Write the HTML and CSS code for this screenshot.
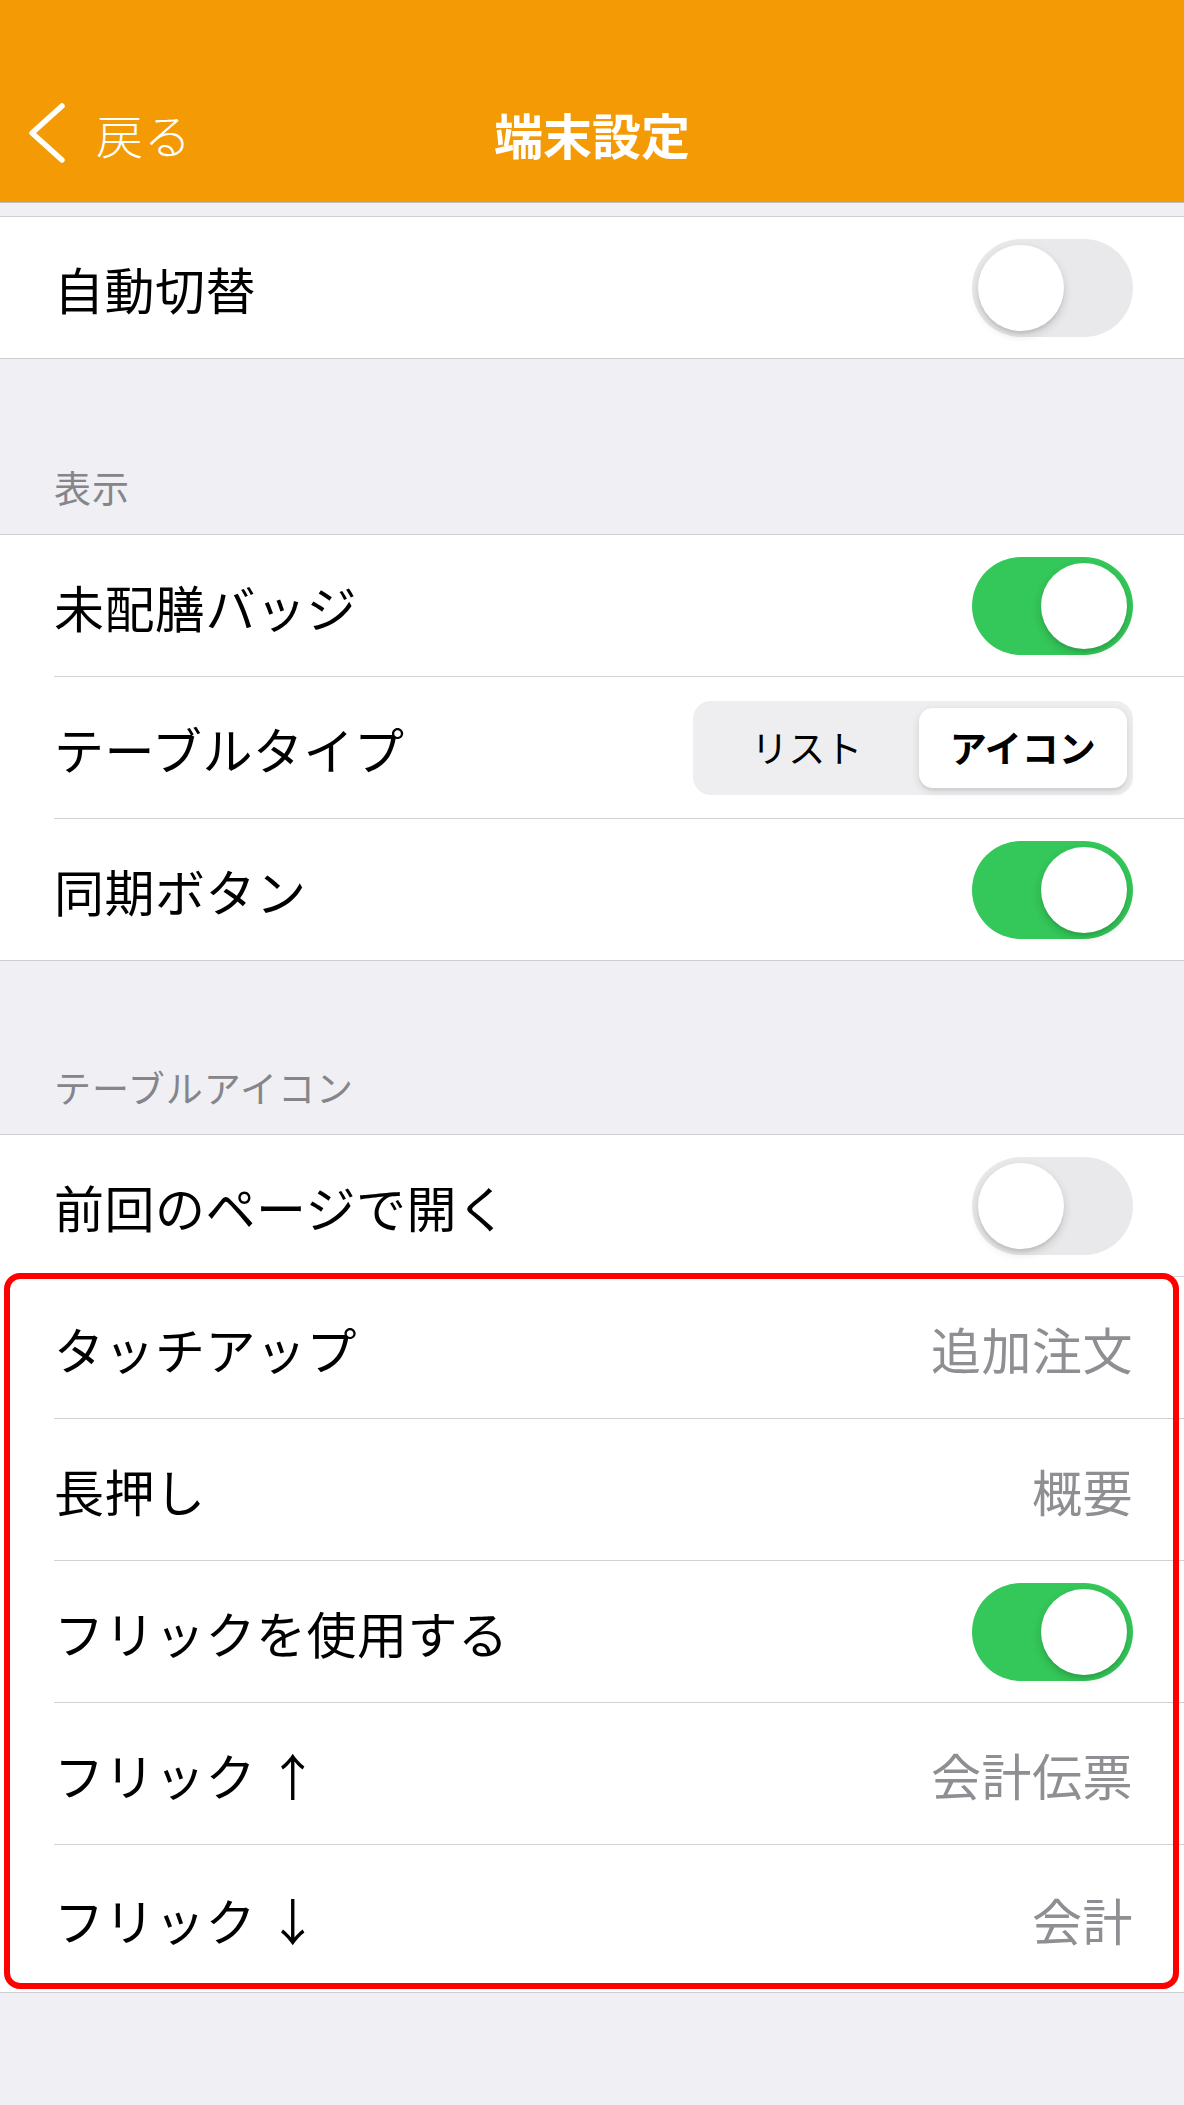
FILE: index.html
```html
<!DOCTYPE html>
<html lang="ja">
<head>
<meta charset="utf-8">
<title>端末設定</title>
<link rel="stylesheet" href="styles.css">
</head>
<body>
<header class="header">
  <div class="navbar">
    <div class="back">
      <svg class="chevron" width="40" height="64" viewBox="0 0 40 64" aria-hidden="true">
        <polyline points="34,5 4,32 34,59" fill="none" stroke="#fff" stroke-width="5.5" stroke-linecap="round" stroke-linejoin="round"/>
      </svg>
      <span class="back-text">戻る</span>
    </div>
    <div class="title">端末設定</div>
  </div>
</header>

<div class="top-gap"></div>

<section class="group">
  <div class="row">
    <span class="label">自動切替</span>
    <span class="toggle"><span class="knob"></span></span>
  </div>
</section>

<div class="section-header">表示</div>
<section class="group">
  <div class="row">
    <span class="label">未配膳バッジ</span>
    <span class="toggle on"><span class="knob"></span></span>
  </div>
  <div class="row">
    <span class="label">テーブルタイプ</span>
    <div class="segmented">
      <span class="seg">リスト</span>
      <span class="seg selected">アイコン</span>
    </div>
  </div>
  <div class="row">
    <span class="label">同期ボタン</span>
    <span class="toggle on"><span class="knob"></span></span>
  </div>
</section>

<div class="section-header second">テーブルアイコン</div>
<section class="group">
  <div class="row">
    <span class="label">前回のページで開く</span>
    <span class="toggle"><span class="knob"></span></span>
  </div>
  <div class="highlight">
    <div class="row sep">
      <span class="label">タッチアップ</span>
      <span class="value">追加注文</span>
    </div>
    <div class="row">
      <span class="label">長押し</span>
      <span class="value">概要</span>
    </div>
    <div class="row">
      <span class="label">フリックを使用する</span>
      <span class="toggle on"><span class="knob"></span></span>
    </div>
    <div class="row">
      <span class="label">フリック ↑</span>
      <span class="value">会計伝票</span>
    </div>
    <div class="row last">
      <span class="label">フリック ↓</span>
      <span class="value">会計</span>
    </div>
  </div>
</section>
</body>
</html>
```

FILE: styles.css
```css
* {
  box-sizing: border-box;
}

html, body {
  margin: 0;
  padding: 0;
}

body {
  background: #efeff4;
  min-height: 2105px;
  font-family: "Noto Sans CJK JP", "Noto Sans", sans-serif;
  color: #000;
}

.header {
  height: 203px;
  background: #f39a04;
  border-bottom: 1px solid #bdbdbd;
  padding-top: 64px;
}

.navbar {
  position: relative;
  height: 138px;
  display: flex;
  align-items: center;
  justify-content: center;
}

.back {
  position: absolute;
  left: 28px;
  top: 0;
  bottom: 0;
  display: flex;
  align-items: center;
  gap: 28px;
}

.chevron {
  display: block;
}

.back-text {
  color: #fff;
  font-size: 47px;
  font-weight: 300;
  line-height: 1;
  letter-spacing: 1px;
}

.title {
  color: #fff;
  font-size: 49px;
  font-weight: 700;
  line-height: 1;
}

.top-gap {
  height: 13px;
}

.group {
  background: #fff;
  border-top: 1px solid #cfcfd3;
  border-bottom: 1px solid #cfcfd3;
}

.row {
  margin-left: 54px;
  padding-right: 51px;
  height: 141px;
  display: flex;
  align-items: center;
  justify-content: space-between;
}

.row + .row,
.row.sep {
  height: 142px;
  border-top: 1px solid #d2d2d6;
}

.row.last {
  height: 148px;
}

.label {
  font-size: 50px;
  line-height: 1;
  letter-spacing: 0.5px;
}

.value {
  font-size: 50px;
  line-height: 1;
  color: #8e8e93;
  letter-spacing: 0.5px;
}

.section-header {
  height: 175px;
  display: flex;
  align-items: flex-end;
  padding: 0 0 27px 54px;
  font-size: 37px;
  line-height: 40px;
  color: #85858a;
  letter-spacing: 1px;
}

.section-header.second {
  height: 173px;
}

.toggle {
  position: relative;
  width: 161px;
  height: 98px;
  border-radius: 49px;
  background: #e9e9eb;
  flex: none;
}

.toggle .knob {
  position: absolute;
  top: 6px;
  left: 6px;
  width: 86px;
  height: 86px;
  border-radius: 50%;
  background: #fff;
  box-shadow: 0 4px 10px rgba(0, 0, 0, 0.16), 0 3px 2px rgba(0, 0, 0, 0.05);
}

.toggle.on {
  background: #34c759;
}

.toggle.on .knob {
  left: auto;
  right: 6px;
}

.segmented {
  width: 440px;
  height: 94px;
  padding: 7px 6px 7px 7px;
  border-radius: 18px;
  background: #eeeef0;
  display: grid;
  grid-template-columns: 1fr 1fr;
  flex: none;
}

.seg {
  display: flex;
  align-items: center;
  justify-content: center;
  font-size: 37px;
  line-height: 1;
  color: #000;
  border-radius: 14px;
}

.seg.selected {
  margin-left: 5px;
  background: #fff;
  font-weight: 700;
  box-shadow: 0 3px 8px rgba(0, 0, 0, 0.12), 0 3px 1px rgba(0, 0, 0, 0.04);
}

.highlight {
  position: relative;
}

.highlight::after {
  content: "";
  position: absolute;
  top: -3px;
  left: 4px;
  right: 5px;
  bottom: 3px;
  border: 6px solid #ff0000;
  border-radius: 16px;
  pointer-events: none;
}
```
